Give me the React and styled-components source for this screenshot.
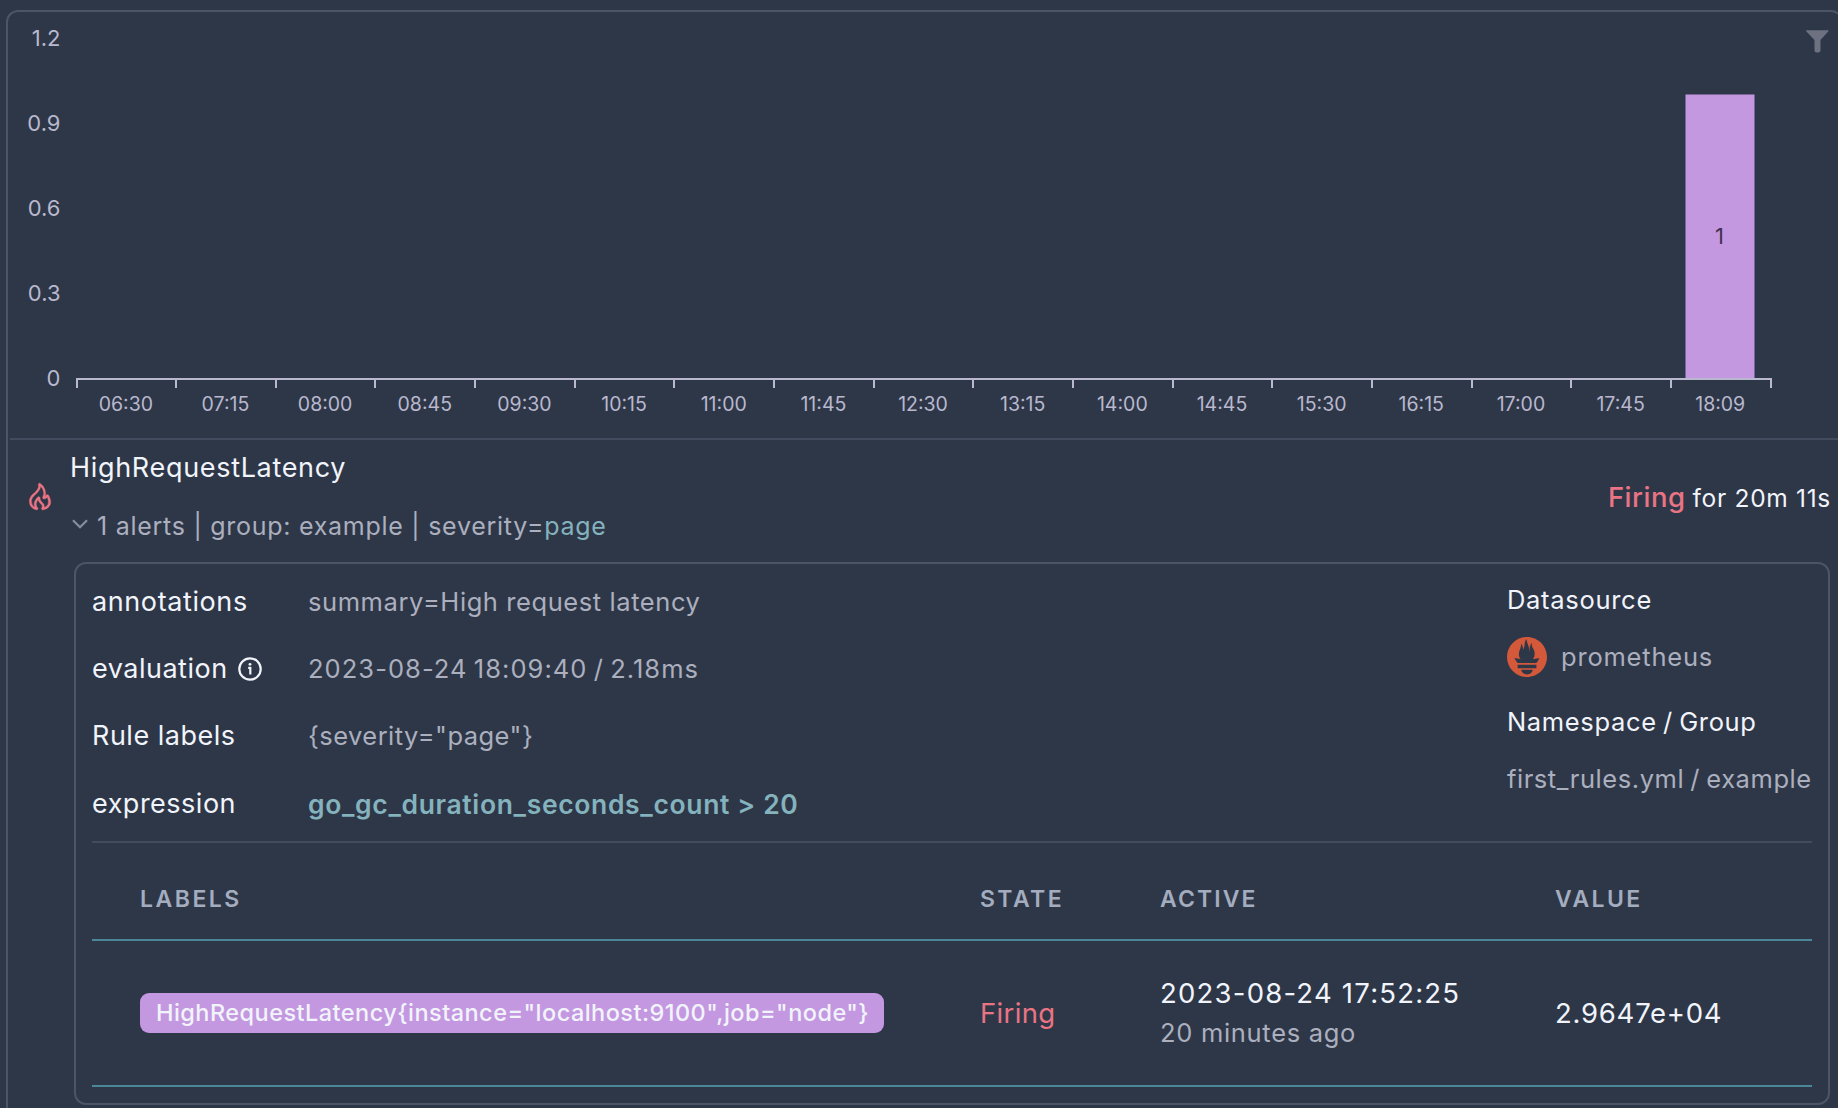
import React from 'react';
import styled, { createGlobalStyle } from 'styled-components';
import { SiPrometheus } from 'react-icons/si';
import { VscFlame } from 'react-icons/vsc';

const color = {
  bg: '#2e3748',
  border: '#4b5567',
  divider: '#424c5e',
  teal: '#4b8796',
  text: '#f1f4fa',
  muted: '#abafbe',
  heading: '#a3adbf',
  accent: '#84b2bd',
  firing: '#ea7483',
  purple: '#c398e1',
  axis: '#b9b8ce',
  prometheus: '#d4593b',
};

const GlobalStyle = createGlobalStyle`
  html, body {
    margin: 0;
    background: ${color.bg};
  }
  body {
    font-family: Inter, "Liberation Sans", sans-serif;
    color: ${color.text};
    overflow: hidden;
  }
  *, *::before, *::after { box-sizing: border-box; }
`;

const Page = styled.main`
  width: 1838px;
  height: 1108px;
  padding: 10px 0 0 6px;
  overflow: hidden;
  background: ${color.bg};
`;

const Panel = styled.section`
  width: 1837px;
  height: 1140px;
  border: 2px solid ${color.border};
  border-radius: 12px;
`;

const ChartArea = styled.div`
  height: 428px;
  margin-left: 2px;
  border-bottom: 2px solid ${color.divider};
`;

const ChartSvg = styled.svg`
  display: block;
  font-family: Inter, "Liberation Sans", sans-serif;
`;

const Text = styled.span`
  font-size: ${(p) => p.$size || 25.5}px;
  font-weight: ${(p) => p.$weight || 400};
  letter-spacing: ${(p) => p.$spacing || 0}px;
  word-spacing: ${(p) => p.$gap || 0}px;
  line-height: 40px;
  color: ${(p) => color[p.$tone || 'text']};
  white-space: pre;
`;

const AlertHeader = styled.header`
  display: flex;
  align-items: center;
  height: 122px;
  width: 1823px;
  padding-left: 15px;
`;

const StateIcon = styled.div`
  display: flex;
  width: 47px;
  padding-bottom: 10px;
  color: ${color.firing};
  svg {
    display: block;
    width: 34px;
    height: 31px;
    stroke-width: 0.2px;
  }
`;

const AlertTitle = styled.div`
  display: flex;
  flex-direction: column;
  gap: 18px;
  padding-bottom: 9px;
  flex: 1;
`;

const Summary = styled.div`
  display: flex;
  align-items: center;
`;

const Chevron = styled.svg`
  display: block;
  width: 26px;
  height: 26px;
  margin: 0 4px 3px -3px;
`;

const Status = styled.div`
  display: flex;
  align-items: baseline;
  gap: 7px;
  padding-bottom: 8px;
`;

const Card = styled.article`
  width: 1756px;
  height: 543px;
  margin-left: 66px;
  padding: 4px 16px 0;
  border: 2px solid ${color.border};
  border-radius: 12px;
`;

const Details = styled.div`
  display: flex;
  justify-content: space-between;
  height: 275px;
  border-bottom: 2px solid ${color.divider};
`;

const Fields = styled.dl`
  display: grid;
  grid-template-columns: 216px auto;
  grid-auto-rows: 67.3px;
  align-items: center;
  align-content: start;
  margin: 0;
`;

const FieldName = styled.dt`
  display: flex;
  align-items: center;
  gap: 10px;
`;

const FieldValue = styled.dd`
  margin: 0;
`;

const Source = styled.aside`
  display: flex;
  flex-direction: column;
  width: 305px;
  padding-top: 12px;
`;

const SourceName = styled.div`
  display: flex;
  align-items: center;
  gap: 14px;
  margin: 17px 0 25px;
  svg { display: block; color: ${color.prometheus}; }
`;

const SourcePath = styled.div`
  display: flex;
  margin-top: 17px;
`;

const Row = styled.div`
  display: grid;
  grid-template-columns: 840px 180px 395px 1fr;
  align-items: center;
  height: ${(p) => (p.$head ? 98 : 146)}px;
  padding: ${(p) => (p.$head ? '15px 0 0 48px' : '0 0 0 48px')};
  border-bottom: 2px solid ${color.teal};
`;

const Badge = styled.span`
  display: flex;
  align-items: center;
  justify-self: start;
  width: 744px;
  height: 40px;
  padding-left: 16px;
  border-radius: 9px;
  background: ${color.purple};
`;

const Cell = styled.div`
  display: flex;
  flex-direction: column;
`;

const times = ['06:30', '07:15', '08:00', '08:45', '09:30', '10:15', '11:00', '11:45', '12:30',
  '13:15', '14:00', '14:45', '15:30', '16:15', '17:00', '17:45', '18:09'];
const levels = ['1.2', '0.9', '0.6', '0.3', '0'];

function AlertChart() {
  const left = 67;
  const base = 367;
  const step = 99.65;
  return (
    <ChartSvg width="1828" height="426" viewBox="0 0 1828 426">
      {levels.map((label, i) => (
        <text key={label} x="50.5" y={33.8 + i * 85} textAnchor="end" fontSize="22" fill={color.axis}>{label}</text>
      ))}
      <rect x="1675.5" y="82.5" width="69" height="284" fill={color.purple} />
      <text x="1709.5" y="231.5" textAnchor="middle" fontSize="22" fill="#44304f">1</text>
      <path d={`M${left - 1} ${base}H1762`} stroke={color.axis} strokeWidth="2" />
      {Array.from({ length: times.length + 1 }, (_, i) => (
        <path key={i} d={`M${Math.floor(left + i * step)} ${base}v9`} stroke={color.axis} strokeWidth="2" />
      ))}
      {times.map((t, i) => (
        <text key={t} x={left - 1 + (i + 0.5) * step} y="399" textAnchor="middle" fontSize="19.5" fill={color.axis}>{t}</text>
      ))}
      <path
        d="M1796 18.2h22.6l-.4 1.2-7.7 8.6v10.2q0 2.2-2.3 2.2h-1.4q-2.3 0-2.3-2.2v-10.2l-8.1-8.6z"
        fill="#6e7280"
      />
    </ChartSvg>
  );
}

function InfoIcon() {
  return (
    <svg width="24" height="24" viewBox="0 0 24 24" fill="none" stroke={color.text}>
      <circle cx="12" cy="12" r="10.7" strokeWidth="2.2" />
      <circle cx="12" cy="7.3" r="1.4" fill={color.text} stroke="none" />
      <path d="M10.2 10.9H12.3V17.4" strokeWidth="2.2" />
    </svg>
  );
}

export default function App() {
  return (
    <>
      <GlobalStyle />
      <Page>
        <Panel>
          <ChartArea><AlertChart /></ChartArea>
          <AlertHeader>
            <StateIcon><VscFlame preserveAspectRatio="none" /></StateIcon>
            <AlertTitle>
              <Text $size={27} $spacing={0.68}>HighRequestLatency</Text>
              <Summary>
                <Chevron viewBox="0 0 24 24" fill="none" stroke="#858c9c" strokeWidth="2.1">
                  <path d="M5.500 8.500 12 15l6.500-6.500" />
                </Chevron>
                <Text $size={25} $spacing={0.73} $tone="muted">1 alerts | group: example | severity=</Text>
                <Text $size={25} $spacing={0.7} $tone="accent">page</Text>
              </Summary>
            </AlertTitle>
            <Status>
              <Text $size={27.5} $weight={500} $spacing={0.5} $tone="firing">Firing</Text>
              <Text $size={24.5} $spacing={0.7}>for 20m 11s</Text>
            </Status>
          </AlertHeader>
          <Card>
            <Details>
              <Fields>
                <FieldName><Text $size={27} $spacing={0.6}>annotations</Text></FieldName>
                <FieldValue><Text $spacing={0.58} $tone="muted">summary=High request latency</Text></FieldValue>
                <FieldName><Text $size={27} $spacing={0.5}>evaluation</Text><InfoIcon /></FieldName>
                <FieldValue><Text $spacing={1.05} $gap={-2} $tone="muted">2023-08-24 18:09:40 / 2.18ms</Text></FieldValue>
                <FieldName><Text $size={27} $spacing={0.5}>Rule labels</Text></FieldName>
                <FieldValue><Text $spacing={0.45} $tone="muted">{'{severity="page"}'}</Text></FieldValue>
                <FieldName><Text $size={27} $spacing={0.5}>expression</Text></FieldName>
                <FieldValue>
                  <Text $size={26.5} $weight={600} $spacing={0.65} $tone="accent">{'go_gc_duration_seconds_count > 20'}</Text>
                </FieldValue>
              </Fields>
              <Source>
                <Text $spacing={0.7}>Datasource</Text>
                <SourceName>
                  <SiPrometheus size={40} />
                  <Text $spacing={0.8} $tone="muted">prometheus</Text>
                </SourceName>
                <Text $spacing={0.65} $gap={-1.5}>Namespace / Group</Text>
                <SourcePath><Text $spacing={0.55} $gap={-1.5} $tone="muted">first_rules.yml / example</Text></SourcePath>
              </Source>
            </Details>
            <Row $head>
              <Text $size={23} $weight={600} $spacing={2.5} $tone="heading">LABELS</Text>
              <Text $size={23} $weight={600} $spacing={2.4} $tone="heading">STATE</Text>
              <Text $size={23} $weight={600} $spacing={2.1} $tone="heading">ACTIVE</Text>
              <Text $size={23} $weight={600} $spacing={2.4} $tone="heading">VALUE</Text>
            </Row>
            <Row>
              <Badge>
                <Text $size={23.5} $weight={500} $spacing={0.46}>{'HighRequestLatency{instance="localhost:9100",job="node"}'}</Text>
              </Badge>
              <Cell><Text $size={27.5} $spacing={0.35} $tone="firing">Firing</Text></Cell>
              <Cell>
                <Text $size={27.5} $spacing={1.22}>2023-08-24 17:52:25</Text>
                <Text $spacing={0.7} $tone="muted">20 minutes ago</Text>
              </Cell>
              <Cell><Text $size={27.5} $spacing={0.75}>2.9647e+04</Text></Cell>
            </Row>
          </Card>
        </Panel>
      </Page>
    </>
  );
}
